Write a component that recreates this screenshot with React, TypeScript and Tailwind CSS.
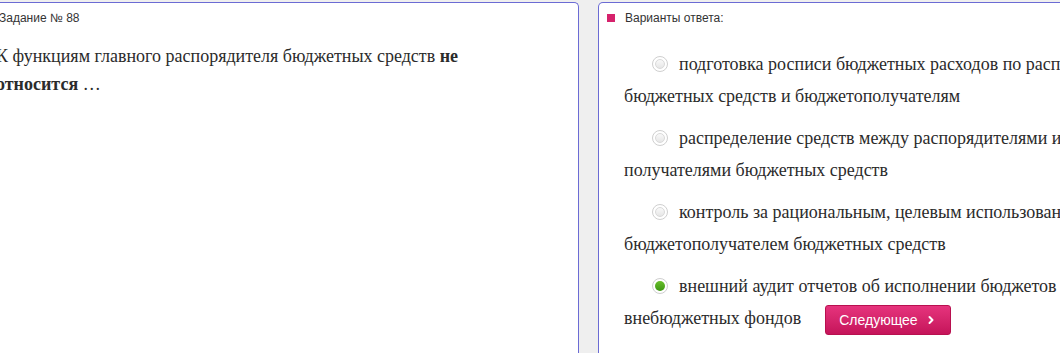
import { ChevronRight } from "lucide-react";

const options = [
  {
    first: "подготовка росписи бюджетных расходов по распорядителям",
    second: "бюджетных средств и бюджетополучателям",
    checked: false,
  },
  {
    first: "распределение средств между распорядителями и",
    second: "получателями бюджетных средств",
    checked: false,
  },
  {
    first: "контроль за рациональным, целевым использованием",
    second: "бюджетополучателем бюджетных средств",
    checked: false,
  },
  {
    first: "внешний аудит отчетов об исполнении бюджетов государственных",
    second: "внебюджетных фондов",
    checked: true,
  },
];

function Radio({ checked }: { checked: boolean }) {
  return (
    <span className="mr-[11px] inline-block h-[16px] w-[16px] rounded-full border border-[#cfcfcf] bg-white p-[2px] align-[-2px] indent-0">
      <span
        className={
          checked
            ? "block h-full w-full rounded-full bg-gradient-to-b from-[#68bf2a] to-[#3e9712]"
            : "block h-full w-full rounded-full border border-[#d9d9d9] bg-gradient-to-b from-[#f9f9f9] to-[#e6e6e6]"
        }
      />
    </span>
  );
}

export default function App() {
  return (
    <div className="flex h-[353px] overflow-hidden bg-[#efefef] pt-[2px]">
      {/* Question */}
      <div className="ml-[-16px] h-[420px] w-[595px] shrink-0 rounded-t-[5px] border border-b-0 border-[#6b6bd4] bg-white pt-[8px]">
        <p className="pl-[14px] font-['Liberation_Sans',Arial,sans-serif] text-[12px] leading-[14px] text-[#333]">
          Задание № 88
        </p>
        <p className="mt-[17px] pl-[11px] pr-[60px] font-['Liberation_Serif','Times_New_Roman',serif] text-[18px] leading-[28px] text-[#2b2b2b]">
          К функциям главного распорядителя бюджетных средств{" "}
          <b>не относится</b> …
        </p>
      </div>

      {/* Answers */}
      <div className="ml-[19px] h-[420px] w-[760px] shrink-0 rounded-t-[5px] border border-b-0 border-[#6b6bd4] bg-white pt-[8px]">
        <div className="flex items-center pl-[8px]">
          <span className="h-[8px] w-[8px] bg-[#d6226c]" />
          <span className="ml-[10px] font-['Liberation_Sans',Arial,sans-serif] text-[12px] leading-[14px] text-[#333]">
            Варианты ответа:
          </span>
        </div>

        <div className="mt-[23px] pl-[25px] font-['Liberation_Serif','Times_New_Roman',serif] text-[18px] leading-[32px] text-[#2b2b2b]">
          {options.map((o, i) => (
            <p key={i} className="mb-[10px] whitespace-nowrap indent-[28px]">
              <Radio checked={o.checked} />
              {o.first}
              <br />
              {o.second}
              {i === options.length - 1 && (
                <button className="ml-[24px] inline-flex h-[30px] items-center gap-[7px] rounded-[3px] border border-[#b8104f] bg-gradient-to-b from-[#e6337d] to-[#c5135a] pl-[13px] pr-[13px] indent-0 align-middle font-['Liberation_Sans',Arial,sans-serif] text-[14px] text-white">
                  Следующее
                  <ChevronRight size={12} strokeWidth={4} />
                </button>
              )}
            </p>
          ))}
        </div>
      </div>
    </div>
  );
}
